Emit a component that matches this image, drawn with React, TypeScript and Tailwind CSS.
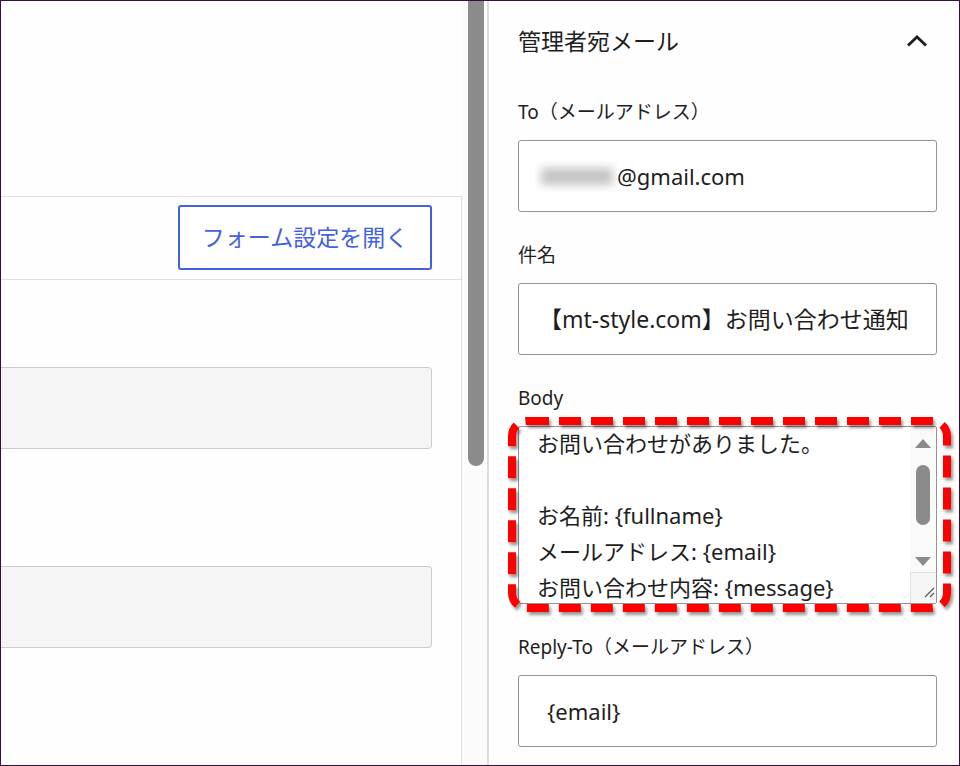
import React from "react";

const font = { fontFamily: '"Noto Sans", "Noto Sans CJK JP", sans-serif' };

function Label({ children }: { children: React.ReactNode }) {
  return <div className="h-[24px] leading-[24px] text-[19px] text-[#1e1e1e] whitespace-nowrap">{children}</div>;
}

function Field({ children, className = "" }: { children: React.ReactNode; className?: string }) {
  return (
    <div className={"mt-[16px] h-[72px] border border-[#949494] rounded-[3px] bg-white flex items-center text-[#1e1e1e] whitespace-nowrap overflow-hidden " + className}>
      {children}
    </div>
  );
}

export default function App() {
  return (
    <div style={font} className="w-[960px] h-[766px] border border-[#3b0d3b] flex overflow-hidden bg-white">
      {/* left column */}
      <div className="w-[461px] shrink-0 flex flex-col bg-[#fefefe]">
        <div className="h-[195px] shrink-0" />
        <div className="flex-1 border-t border-r border-[#e0e0e0] flex flex-col">
          <div className="h-[83px] shrink-0 border-b border-[#e0e0e0] flex justify-end items-start pr-[29px] pt-[8px]">
            <button className="w-[254px] h-[65px] border-2 border-[#4262e3] rounded-[3px] text-[#4262e3] text-[23px] flex items-center justify-center bg-white">
              フォーム設定を開く
            </button>
          </div>
          <div className="pr-[29px] flex flex-col">
            <div className="mt-[87px] h-[82px] bg-[#f5f5f5] border border-l-0 border-[#cccccc] rounded-r-[4px]" />
            <div className="mt-[117px] h-[82px] bg-[#f5f5f5] border border-l-0 border-[#cccccc] rounded-r-[4px]" />
          </div>
        </div>
      </div>

      {/* scrollbar gutter */}
      <div className="w-[27px] shrink-0 flex border-r-2 border-[#dddddd] bg-[#fbfbfb]">
        <div className="ml-[6px] w-[16px] h-[465px] bg-[#8b8b8b] rounded-b-[8px]" />
      </div>

      {/* right panel */}
      <div className="flex-1 flex flex-col pl-[29px] pr-[22px] bg-[#fefefe]">
        <div className="mt-[26px] h-[28px] flex items-center justify-between">
          <div className="text-[23px] leading-[28px] text-[#1e1e1e] whitespace-nowrap">管理者宛メール</div>
          <svg width="22" height="12" viewBox="0 0 22 12" className="mr-[9px] mb-[1px]">
            <path d="M2 10.5 L11 2 L20 10.5" fill="none" stroke="#1e1e1e" strokeWidth="2.8" />
          </svg>
        </div>

        <div className="mt-[45px]"><Label>To（メールアドレス）</Label></div>
        <Field className="pl-[16px] text-[22px]">
          <div className="relative w-[82px] h-[31px] overflow-hidden shrink-0">
            <div className="absolute left-[6px] top-[7px] w-[72px] h-[17px] bg-[#c4c4c4] blur-[5px]" />
          </div>
          <span>@gmail.com</span>
        </Field>

        <div className="mt-[31px]"><Label>件名</Label></div>
        <Field className="pl-[20px] text-[23px]">
          <span>【mt-style.com】お問い合わせ通知</span>
        </Field>

        <div className="mt-[31px]"><Label>Body</Label></div>
        <div className="relative mt-[16px] h-[178px]">
          <div className="h-full border border-[#949494] rounded-[2px] bg-white flex overflow-hidden">
            <div className="flex-1 pl-[18px] -mt-[2px] text-[22px] leading-[36px] text-[#1e1e1e] whitespace-nowrap overflow-hidden">
              <div>お問い合わせがありました。</div>
              <div>&nbsp;</div>
              <div>お名前: {"{fullname}"}</div>
              <div>メールアドレス: {"{email}"}</div>
              <div>お問い合わせ内容: {"{message}"}</div>
            </div>
            <div className="w-[26px] shrink-0 flex flex-col items-center bg-[#fafafa]">
              <svg width="16" height="9" viewBox="0 0 16 9" className="mt-[12px]">
                <path d="M8 0 L16 9 L0 9 Z" fill="#8b8b8b" />
              </svg>
              <div className="mt-[17px] w-[14px] h-[60px] rounded-full bg-[#8b8b8b]" />
              <svg width="16" height="9" viewBox="0 0 16 9" className="mt-[32px]">
                <path d="M0 0 L16 0 L8 9 Z" fill="#8b8b8b" />
              </svg>
              <div className="mt-[6px] w-full flex-1 border-t border-l border-[#e3e3e3] bg-[#f6f6f6] relative">
                <svg width="26" height="27" viewBox="0 0 26 27" className="absolute left-0 top-0">
                  <path d="M14 24 L23 15 M19 24 L23 20" stroke="#555" strokeWidth="1.2" fill="none" />
                </svg>
              </div>
            </div>
          </div>
          <svg
            width="456"
            height="212"
            viewBox="0 0 456 212"
            className="absolute left-[-12px] top-[-12px] pointer-events-none overflow-visible"
          >
            <defs>
              <filter id="sh" x="-10%" y="-10%" width="120%" height="130%">
                <feDropShadow dx="2" dy="3" stdDeviation="1.8" floodColor="#000" floodOpacity="0.4" />
              </filter>
            </defs>
            <rect
              x="6"
              y="7"
              width="435"
              height="187"
              rx="15"
              ry="15"
              fill="none"
              stroke="#ff0000"
              strokeWidth="8"
              strokeDasharray="22 10"
              filter="url(#sh)"
            />
          </svg>
        </div>

        <div className="mt-[31px]"><Label>Reply-To（メールアドレス）</Label></div>
        <Field className="pl-[28px] text-[22px]">
          <span>{"{email}"}</span>
        </Field>
      </div>
    </div>
  );
}
